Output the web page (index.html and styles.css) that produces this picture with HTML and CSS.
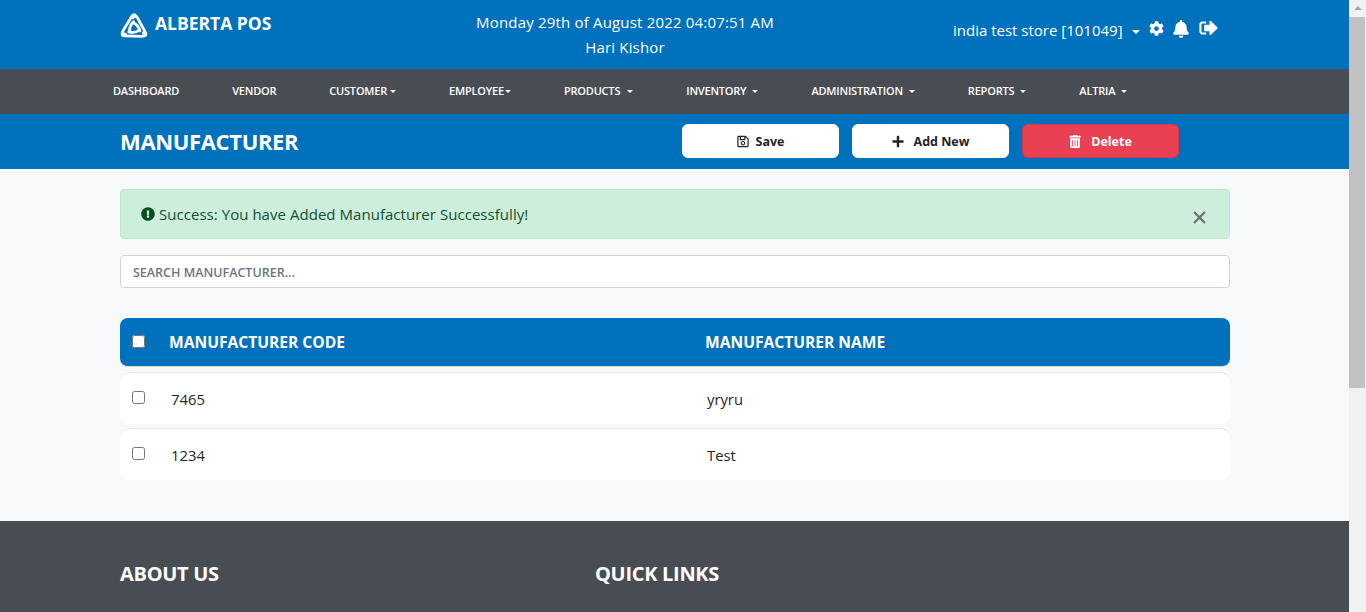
FILE: index.html

```html
<!DOCTYPE html>
<html lang="en">
  <head>
    <meta charset="UTF-8" />
    <meta name="viewport" content="width=device-width, initial-scale=1.0" />
    <title>Manufacturer - Alberta POS</title>
    <link rel="stylesheet" href="styles.css">
  </head>
  <body>
    <div class="page">
      <!-- Top header -->
      <div class="topbar">
        <div class="brand">
          <svg class="brand-logo" viewBox="0 0 26 26">
            <path id="logoArm" d="M15 4 Q13 0.8 11 4 L2.8 17.5 Q1.5 20.5 5 20.5 M12.5 9 Q8.5 13 9 18" />
            <use href="#logoArm" transform="rotate(120 13 15)" />
            <use href="#logoArm" transform="rotate(240 13 15)" />
          </svg>
          <span>ALBERTA POS</span>
        </div>
        <div class="topbar-info">
          <div>Monday 29th of August 2022 04:07:51 AM</div>
          <div>Hari Kishor</div>
        </div>
        <div class="topbar-right">
          <span class="store caret-after">india test store [101049]</span>
          <svg class="top-icon icon-gear" viewBox="0 0 512 512"><path d="M487.4 315.7l-42.6-24.6c4.3-23.2 4.3-47 0-70.2l42.6-24.6c4.9-2.8 7.1-8.6 5.5-14-11.1-35.6-30-67.8-54.7-94.6-3.8-4.1-10-5.1-14.8-2.3L380.8 110c-17.9-15.4-38.5-27.3-60.8-35.1V25.8c0-5.6-3.9-10.5-9.4-11.7-36.7-8.2-74.3-7.8-109.2 0-5.5 1.2-9.4 6.1-9.4 11.7V75c-22.2 7.9-42.8 19.8-60.8 35.1L88.7 85.5c-4.9-2.8-11-1.9-14.8 2.3-24.7 26.7-43.6 58.9-54.7 94.6-1.7 5.4.6 11.2 5.5 14L67.3 221c-4.3 23.2-4.3 47 0 70.2l-42.6 24.6c-4.9 2.8-7.1 8.6-5.5 14 11.1 35.6 30 67.8 54.7 94.6 3.8 4.1 10 5.1 14.8 2.3l42.6-24.6c17.9 15.4 38.5 27.3 60.8 35.1v49.2c0 5.6 3.9 10.5 9.4 11.7 36.7 8.2 74.3 7.8 109.2 0 5.5-1.2 9.4-6.1 9.4-11.7v-49.2c22.2-7.9 42.8-19.8 60.8-35.1l42.6 24.6c4.9 2.8 11 1.9 14.8-2.3 24.7-26.7 43.6-58.9 54.7-94.6 1.5-5.5-.7-11.3-5.6-14.1zM256 336c-44.1 0-80-35.9-80-80s35.9-80 80-80 80 35.9 80 80-35.9 80-80 80z"/></svg>
          <svg class="top-icon icon-bell" viewBox="0 0 448 512"><path d="M224 512c35.32 0 63.97-28.65 63.97-64H160.03c0 35.35 28.65 64 63.97 64zm215.39-149.71c-19.32-20.76-55.47-51.99-55.47-154.29 0-77.7-54.48-139.9-127.94-155.16V32c0-17.67-14.32-32-31.98-32s-31.98 14.33-31.98 32v20.84C118.56 68.1 64.08 130.3 64.08 208c0 102.3-36.15 133.53-55.47 154.29-6 6.45-8.66 14.16-8.61 21.71.11 16.4 12.98 32 32.1 32h383.8c19.12 0 32-15.6 32.1-32 .05-7.55-2.61-15.27-8.61-21.71z"/></svg>
          <svg class="top-icon icon-exit" viewBox="0 0 20 16"><path d="M7 1.2H3.4C1.6 1.2.4 2.4.4 4.2v7.6c0 1.8 1.2 3 3 3H7c.5 0 .7-.3.7-.7v-.7c0-.4-.2-.7-.7-.7H3.6c-.6 0-1-.4-1-1V4.3c0-.6.4-1 1-1H7c.5 0 .7-.3.7-.7v-.7c0-.4-.2-.7-.7-.7z"/><path d="M12.4.7c-.6-.5-1.4-.1-1.4.7v3.1H6.4c-.6 0-1 .4-1 1v5c0 .6.4 1 1 1H11v3.1c0 .8.8 1.2 1.4.7l6.9-6.7c.4-.4.4-1 0-1.4z"/></svg>
        </div>
      </div>

      <!-- Main nav -->
      <div class="mainnav">
        <a>DASHBOARD</a>
        <a>VENDOR</a>
        <a class="caret-after">CUSTOMER</a>
        <a class="caret-after caret-near">EMPLOYEE</a>
        <a class="caret-after caret-far caret-wide">PRODUCTS</a>
        <a class="caret-after caret-far">INVENTORY</a>
        <a class="caret-after caret-far">ADMINISTRATION</a>
        <a class="caret-after caret-far">REPORTS</a>
        <a class="caret-after caret-far">ALTRIA</a>
      </div>

      <!-- Page title and actions -->
      <div class="titlebar">
        <h1>MANUFACTURER</h1>
        <div class="actions">
          <button class="btn">
            <svg class="btn-icon" viewBox="0 0 448 512"><path d="M433.941 129.941l-83.882-83.882A48 48 0 0 0 316.118 32H48C21.49 32 0 53.49 0 80v352c0 26.51 21.49 48 48 48h352c26.51 0 48-21.49 48-48V163.882a48 48 0 0 0-14.059-33.941zM272 80v80H144V80h128zm122 352H54a6 6 0 0 1-6-6V86a6 6 0 0 1 6-6h42v104c0 13.255 10.745 24 24 24h176c13.255 0 24-10.745 24-24V83.882l78.243 78.243a6 6 0 0 1 1.757 4.243V426a6 6 0 0 1-6 6zM224 232c-48.523 0-88 39.477-88 88s39.477 88 88 88 88-39.477 88-88-39.477-88-88-88zm0 128c-22.056 0-40-17.944-40-40s17.944-40 40-40 40 17.944 40 40-17.944 40-40 40z"/></svg>
            Save
          </button>
          <button class="btn">
            <svg class="btn-icon btn-icon-gap" viewBox="0 0 448 512"><path d="M416 208H272V64c0-17.67-14.33-32-32-32h-32c-17.67 0-32 14.33-32 32v144H32c-17.67 0-32 14.33-32 32v32c0 17.67 14.33 32 32 32h144v144c0 17.67 14.33 32 32 32h32c17.67 0 32-14.33 32-32V304h144c17.67 0 32-14.33 32-32v-32c0-17.67-14.33-32-32-32z"/></svg>
            Add New
          </button>
          <button class="btn btn-delete">
            <svg class="btn-icon btn-icon-gap" viewBox="0 0 448 512"><path d="M32 464a48 48 0 0 0 48 48h288a48 48 0 0 0 48-48V128H32zm272-256a16 16 0 0 1 32 0v224a16 16 0 0 1-32 0zm-96 0a16 16 0 0 1 32 0v224a16 16 0 0 1-32 0zm-96 0a16 16 0 0 1 32 0v224a16 16 0 0 1-32 0zM432 32H312l-9.4-18.7A24 24 0 0 0 281.1 0H166.8a23.72 23.72 0 0 0-21.4 13.3L136 32H16A16 16 0 0 0 0 48v32a16 16 0 0 0 16 16h416a16 16 0 0 0 16-16V48a16 16 0 0 0-16-16z"/></svg>
            Delete
          </button>
        </div>
      </div>

      <!-- Content -->
      <div class="content">
        <div class="alert">
          <svg class="alert-icon" viewBox="0 0 512 512"><path d="M504 256c0 136.997-111.043 248-248 248S8 392.997 8 256C8 119.083 119.043 8 256 8s248 111.083 248 248zm-248 50c-25.405 0-46 20.595-46 46s20.595 46 46 46 46-20.595 46-46-20.595-46-46-46zm-43.673-165.346l7.418 136c.347 6.364 5.609 11.346 11.982 11.346h48.546c6.373 0 11.635-4.982 11.982-11.346l7.418-136c.375-6.874-5.098-12.654-11.982-12.654h-63.383c-6.884 0-12.356 5.78-11.981 12.654z"/></svg>
          <span class="alert-text">Success: You have Added Manufacturer Successfully!</span>
          <svg class="alert-close" viewBox="0 0 12 12"><path d="M1 1l10 10M11 1L1 11"/></svg>
        </div>

        <input class="search" type="text" placeholder="SEARCH MANUFACTURER..." />

        <div class="table-head">
          <input type="checkbox" />
          <span>MANUFACTURER CODE</span>
          <span>MANUFACTURER NAME</span>
        </div>
        <div class="table-row">
          <input type="checkbox" />
          <span>7465</span>
          <span>yryru</span>
        </div>
        <div class="table-row">
          <input type="checkbox" />
          <span>1234</span>
          <span>Test</span>
        </div>
      </div>

      <!-- Footer, cut off by the window -->
      <div class="footer">
        <h2 class="footer-about">ABOUT US</h2>
        <h2>QUICK LINKS</h2>
      </div>
    </div>

    <div class="scrollbar">
      <span class="scroll-arrow"></span>
      <span class="scroll-thumb"></span>
    </div>
  </body>
</html>
```

FILE: styles.css

```css
html,
body {
  height: 100%;
}

body {
  margin: 0;
  display: flex;
  overflow: hidden;
  font-family: "Open Sans", Arial, sans-serif;
  background-color: #f8f9fa;
  color: #212529;
}

.page {
  flex: 1;
  min-width: 0;
  height: 612px;
  overflow: hidden;
}

/* Top header */
.topbar {
  display: grid;
  grid-template-columns: 315px 380px 1fr;
  height: 69px;
  padding-left: 120px;
  box-sizing: border-box;
  background-color: #0071bc;
  color: white;
}

.brand {
  display: flex;
  align-items: center;
  gap: 7px;
  height: 50px;
  font-size: 17.5px;
  font-weight: 700;
}

.brand span {
  margin-bottom: 5px;
}

.brand-logo {
  flex: none;
  width: 28px;
  height: 28px;
  margin-top: 2px;
  fill: none;
  stroke: white;
  stroke-width: 2.6;
  stroke-linecap: round;
  stroke-linejoin: round;
}

.topbar-info {
  padding-top: 10px;
  font-size: 15px;
  letter-spacing: 0.18px;
  line-height: 25px;
  text-align: center;
}

.topbar-right {
  display: flex;
  align-items: flex-start;
  padding: 18px 0 0 138px;
  font-size: 15px;
  line-height: 24px;
}

.store {
  margin-right: 9px;
}

.top-icon {
  fill: white;
}

.icon-gear {
  width: 15px;
  height: 15px;
  margin: 3px 9px 0 0;
}

.icon-bell {
  width: 16px;
  height: 18px;
  margin: 2px 10px 0 0;
}

.icon-exit {
  width: 19px;
  height: 16px;
  margin-top: 2px;
}

/* Carets */
.caret-after::after {
  content: "";
  display: inline-block;
  margin-left: 4px;
  vertical-align: 2px;
  border-top: 4px solid white;
  border-left: 4px solid transparent;
  border-right: 4px solid transparent;
}

.store.caret-after::after {
  margin-left: 9px;
}

/* Main nav */
.mainnav {
  display: flex;
  align-items: center;
  gap: 53px;
  height: 45px;
  padding: 0 0 2px 113px;
  box-sizing: border-box;
  background-color: #484d54;
  color: white;
  font-size: 11px;
  font-weight: 600;
  letter-spacing: -0.2px;
}

.mainnav .caret-after::after {
  margin-left: 3px;
  border-width: 3px 3px 0;
}

.mainnav .caret-near::after {
  margin-left: 1px;
}

.mainnav .caret-far::after {
  margin-left: 6px;
}

.mainnav .caret-wide::after {
  margin-left: 7px;
}

/* Title bar */
.titlebar {
  display: flex;
  align-items: center;
  height: 55px;
  padding: 0 0 2px 120px;
  box-sizing: border-box;
  background-color: #0071bc;
}

.titlebar h1 {
  width: 562px;
  margin: 0;
  color: white;
  font-size: 22px;
  font-weight: 700;
  letter-spacing: -0.35px;
}

.actions {
  display: flex;
  gap: 13px;
}

.btn {
  display: flex;
  align-items: center;
  justify-content: center;
  width: 157px;
  height: 34px;
  padding: 1px 0 0;
  border: 1px solid white;
  border-radius: 6px;
  background-color: white;
  color: #212529;
  font-family: inherit;
  font-size: 12.5px;
  font-weight: 700;
}

.btn-delete {
  border-color: #dc3545;
  background-color: #ea4054;
  color: white;
}

.btn-icon {
  width: 12px;
  height: 13px;
  margin-right: 7px;
  fill: currentColor;
}

.btn-icon-gap {
  margin-right: 10px;
}

/* Content */
.content {
  height: 352px;
  padding: 20px 119px 0 120px;
  box-sizing: border-box;
}

.alert {
  display: flex;
  align-items: center;
  height: 50px;
  padding: 0 23px 0 20px;
  box-sizing: border-box;
  border: 1px solid #c3e6cb;
  border-radius: 4px;
  background-color: #cdeedb;
  color: #0f5132;
  font-size: 15px;
  letter-spacing: 0.04px;
}

.alert-icon {
  width: 14px;
  height: 14px;
  margin-right: 4px;
  fill: #0b4d22;
}

.alert-text {
  flex: 1;
}

.alert-close {
  width: 13px;
  height: 13px;
  margin-top: 7px;
  fill: none;
  stroke: #68736c;
  stroke-width: 2;
}

.search {
  display: block;
  width: 100%;
  height: 33px;
  margin: 16px 0 30px;
  padding: 1px 12px 0;
  box-sizing: border-box;
  border: 1px solid #ced4da;
  border-radius: 4px;
  background-color: white;
  font-family: inherit;
  font-size: 12.5px;
  font-weight: 600;
}

.search::placeholder {
  color: #6c757d;
  opacity: 1;
}

.table-head,
.table-row {
  display: grid;
  grid-template-columns: 49px 536px 1fr;
  align-items: center;
  box-sizing: border-box;
}

.table-head input,
.table-row input {
  width: 13px;
  height: 13px;
  margin: 0 0 2px 12px;
}

.table-head {
  height: 49px;
  border-bottom: 1px solid #d5dbe0;
  border-radius: 8px;
  background-color: #0071bc;
  color: white;
  font-size: 15.6px;
  font-weight: 700;
}

.table-row {
  height: 52px;
  margin-top: 5px;
  border-top: 1px solid #e3e6ea;
  border-radius: 10px;
  background-color: white;
  color: #212529;
  font-size: 14.8px;
}

.table-row + .table-row {
  margin-top: 4px;
}

.table-row span {
  padding-left: 2px;
}

/* Footer */
.footer {
  display: flex;
  height: 91px;
  padding: 39px 0 0 120px;
  box-sizing: border-box;
  background-color: #484d54;
  color: white;
}

.footer h2 {
  margin: 0;
  font-size: 20px;
  font-weight: 700;
  letter-spacing: -0.3px;
}

.footer-about {
  width: 475px;
}

/* Window scrollbar */
.scrollbar {
  flex: none;
  width: 17px;
  height: 612px;
  background-color: #f1f1f1;
}

.scroll-arrow {
  display: block;
  width: 0;
  margin: 6px auto 7px;
  border-bottom: 4px solid #a3a3a3;
  border-left: 4px solid transparent;
  border-right: 4px solid transparent;
}

.scroll-thumb {
  display: block;
  height: 371px;
  margin: 0 1px 0 0;
  background-color: #c1c1c1;
}
```
